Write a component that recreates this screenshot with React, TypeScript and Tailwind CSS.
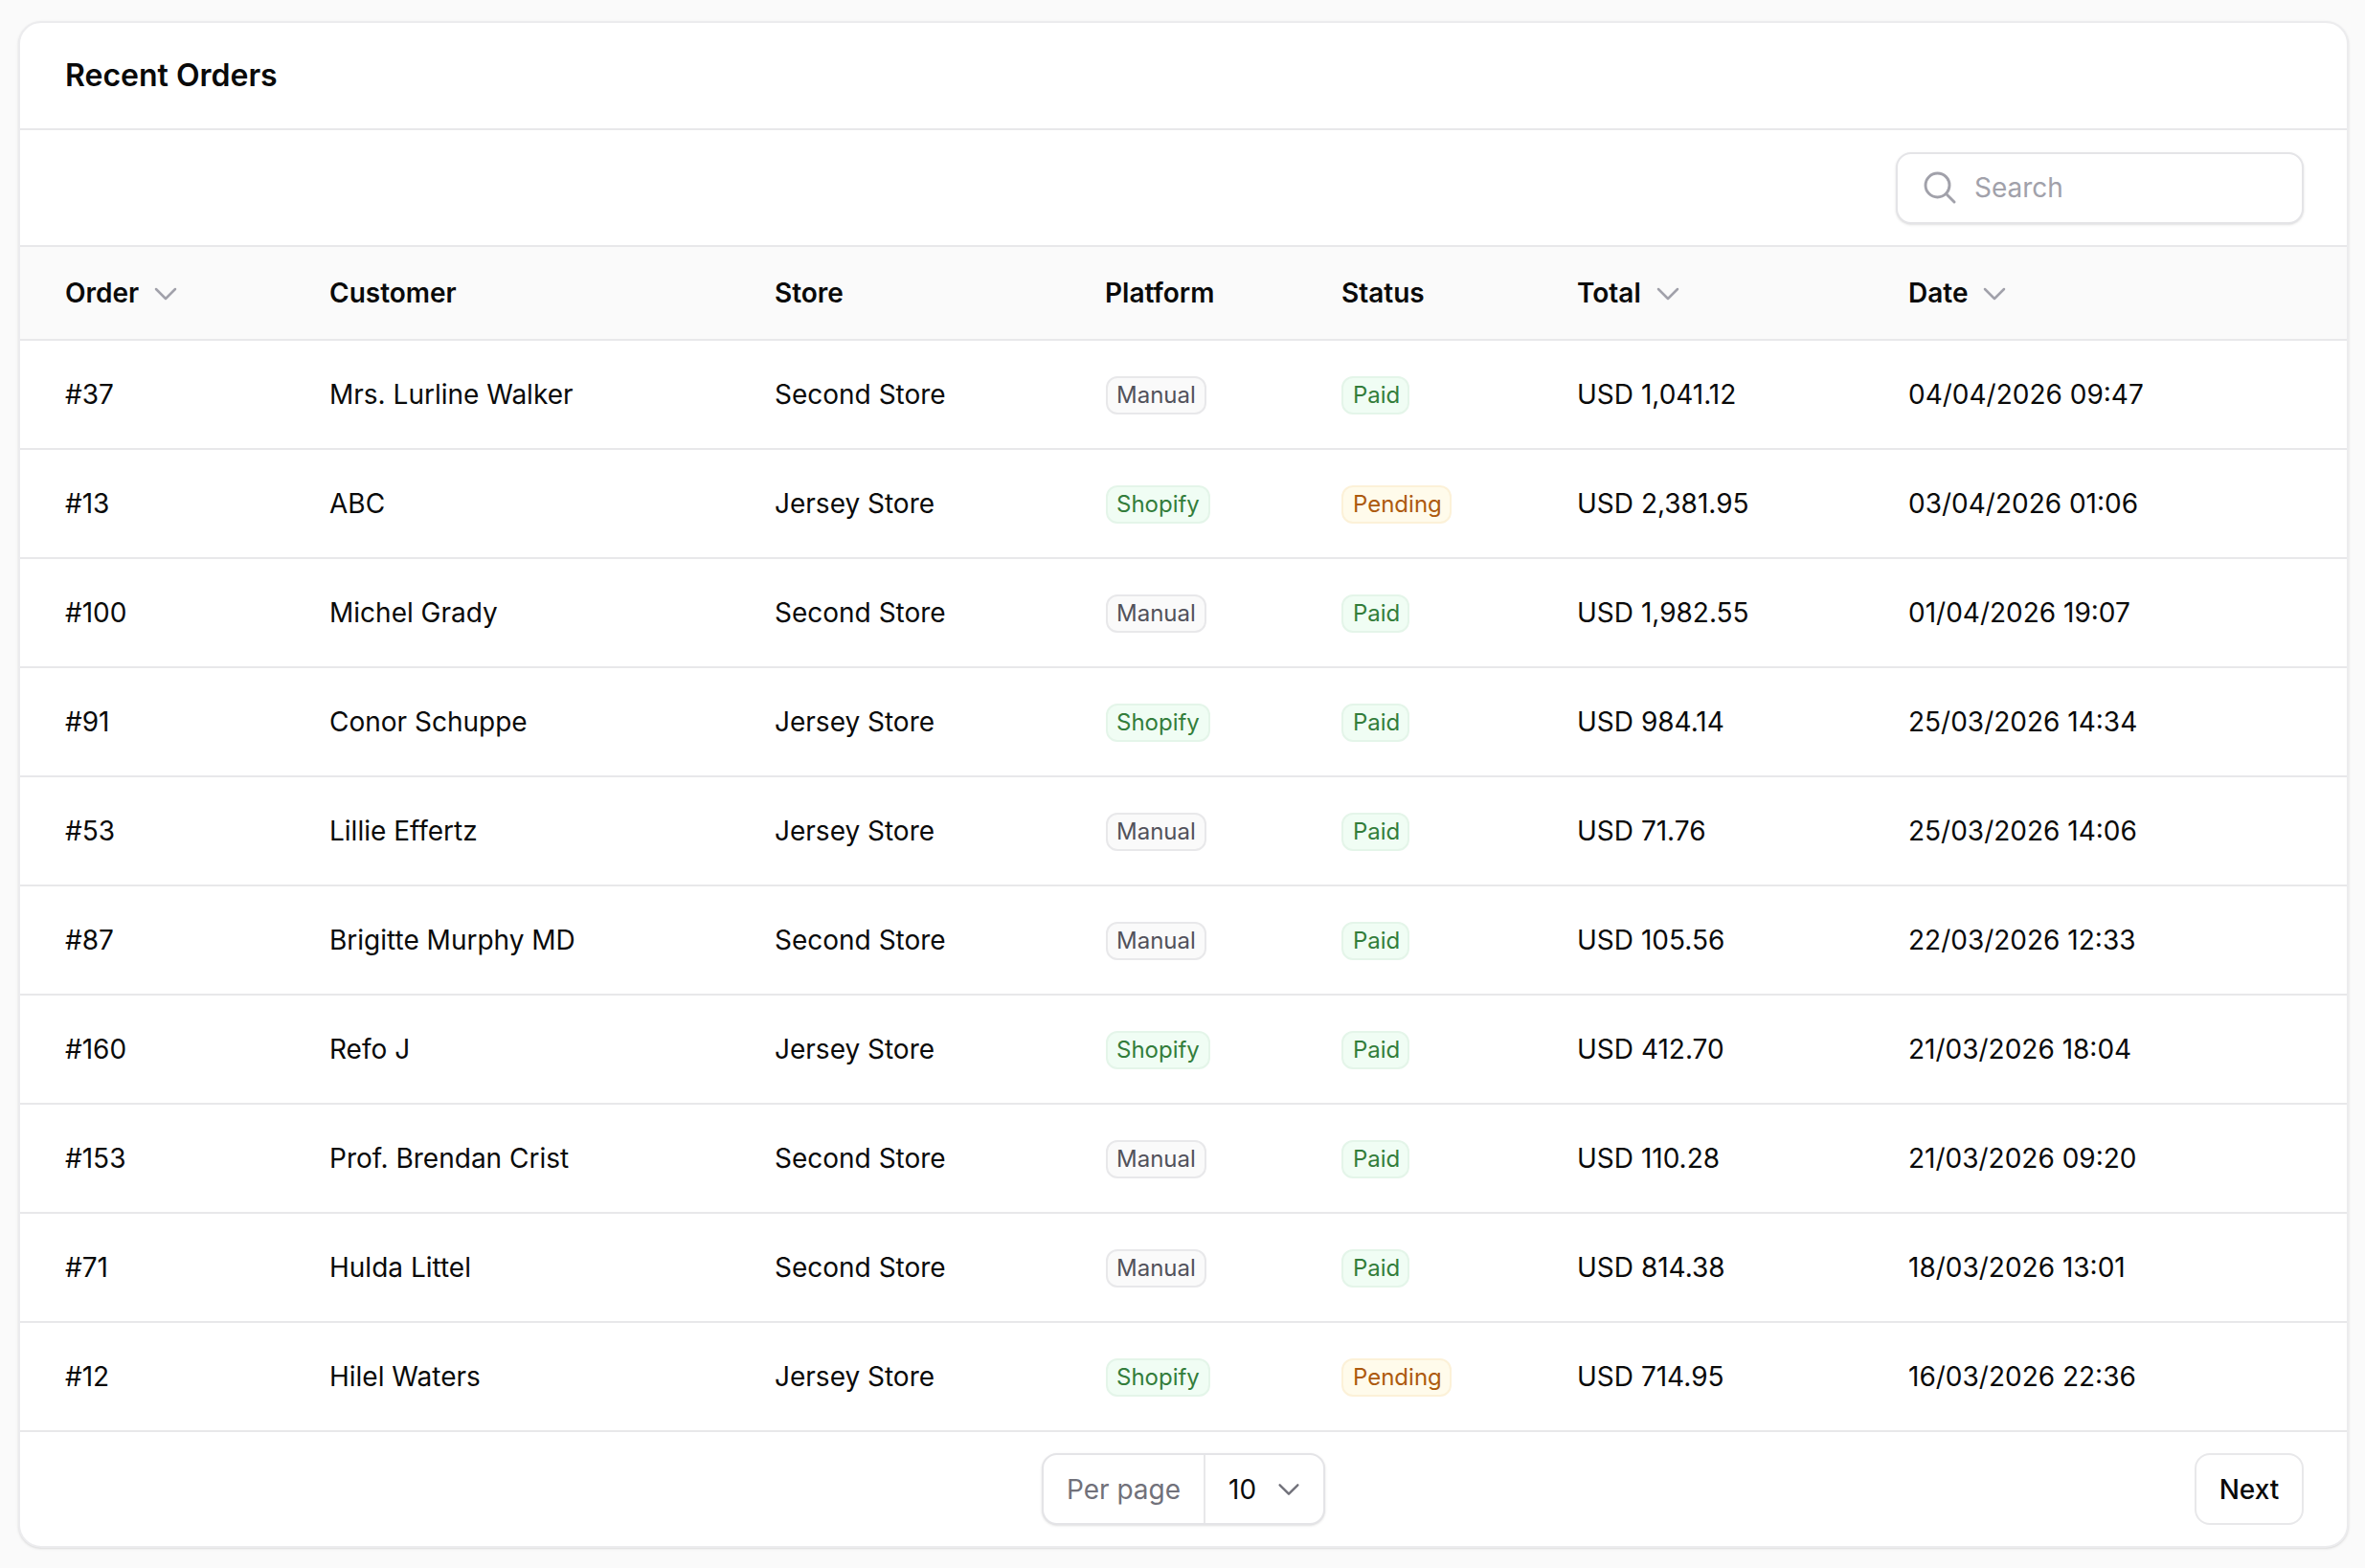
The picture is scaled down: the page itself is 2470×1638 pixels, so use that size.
const orders = [
    { id: '#37', customer: 'Mrs. Lurline Walker', store: 'Second Store', platform: 'Manual', status: 'Paid', total: 'USD 1,041.12', date: '04/04/2026 09:47' },
    { id: '#13', customer: 'ABC', store: 'Jersey Store', platform: 'Shopify', status: 'Pending', total: 'USD 2,381.95', date: '03/04/2026 01:06' },
    { id: '#100', customer: 'Michel Grady', store: 'Second Store', platform: 'Manual', status: 'Paid', total: 'USD 1,982.55', date: '01/04/2026 19:07' },
    { id: '#91', customer: 'Conor Schuppe', store: 'Jersey Store', platform: 'Shopify', status: 'Paid', total: 'USD 984.14', date: '25/03/2026 14:34' },
    { id: '#53', customer: 'Lillie Effertz', store: 'Jersey Store', platform: 'Manual', status: 'Paid', total: 'USD 71.76', date: '25/03/2026 14:06' },
    { id: '#87', customer: 'Brigitte Murphy MD', store: 'Second Store', platform: 'Manual', status: 'Paid', total: 'USD 105.56', date: '22/03/2026 12:33' },
    { id: '#160', customer: 'Refo J', store: 'Jersey Store', platform: 'Shopify', status: 'Paid', total: 'USD 412.70', date: '21/03/2026 18:04' },
    { id: '#153', customer: 'Prof. Brendan Crist', store: 'Second Store', platform: 'Manual', status: 'Paid', total: 'USD 110.28', date: '21/03/2026 09:20' },
    { id: '#71', customer: 'Hulda Littel', store: 'Second Store', platform: 'Manual', status: 'Paid', total: 'USD 814.38', date: '18/03/2026 13:01' },
    { id: '#12', customer: 'Hilel Waters', store: 'Jersey Store', platform: 'Shopify', status: 'Pending', total: 'USD 714.95', date: '16/03/2026 22:36' },
];

const badgeStyles: Record<string, string> = {
    Manual: 'ml-[1px] px-[9px] bg-[#fafafa] border-[#e8e8ea] text-[#52525b]',
    Shopify: 'ml-[1px] px-[9px] bg-[#f0fdf4] border-[#e4f5e9] text-[#337d3b]',
    Paid: 'pl-[10px] pr-[8px] bg-[#f0fdf4] border-[#e4f5e9] text-[#337d3b]',
    Pending: 'pl-[10px] pr-[8px] bg-[#fffbeb] border-[#fcf1d8] text-[#ad5a0e]',
};

function Chevron({ className }: { className: string }) {
    return (
        <svg viewBox="0 0 24 24" fill="none" stroke="currentColor" strokeWidth={1.9} strokeLinecap="round" strokeLinejoin="round" className={className}>
            <path d="m19.5 8.25-7.5 7.5-7.5-7.5" />
        </svg>
    );
}

function Badge({ label }: { label: string }) {
    return (
        <div className="flex items-center pt-[1px]">
            <span className={`inline-flex h-[40px] items-center rounded-[12px] border-2 text-[24px] leading-[32px] ${badgeStyles[label]}`}>
                {label}
            </span>
        </div>
    );
}

function SortHead({ label, className }: { label: string; className: string }) {
    return (
        <th className={`border-b-2 border-[#e8e8ea] text-left text-[28px] font-semibold ${className}`}>
            <span className="flex items-center gap-[12px]">
                {label}
                <Chevron className="mt-[1px] h-[32px] w-[32px] text-[#a1a1aa]" />
            </span>
        </th>
    );
}

function PlainHead({ label, className }: { label: string; className: string }) {
    return <th className={`border-b-2 border-[#e8e8ea] text-left text-[28px] font-semibold ${className}`}>{label}</th>;
}

export default function App() {
    return (
        <div className="min-h-screen bg-[#fafafa] pl-[19px] pr-[17px] pt-[22px] font-['Inter',sans-serif] text-[#0a0a0a]">
            <div className="overflow-hidden rounded-[24px] border-2 border-[#ececee] bg-white shadow-sm">
                {/* Title */}
                <div className="flex h-[112px] items-center border-b-2 border-[#e8e8ea] pl-[47px]">
                    <h2 className="text-[32px] font-semibold">Recent Orders</h2>
                </div>

                {/* Toolbar */}
                <div className="flex h-[122px] items-center justify-end border-b-2 border-[#e8e8ea] pr-[45px]">
                    <div className="flex h-[75px] w-[426px] items-center gap-[16px] rounded-[16px] border-2 border-[#e4e4e7] bg-white pl-[24px] shadow-sm">
                        <svg viewBox="0 0 24 24" fill="none" stroke="#a1a1aa" strokeWidth={1.75} strokeLinecap="round" strokeLinejoin="round" className="h-[40px] w-[40px]">
                            <path d="m21 21-5.197-5.197m0 0A7.5 7.5 0 1 0 5.196 5.196a7.5 7.5 0 0 0 10.607 10.607Z" />
                        </svg>
                        <span className="text-[28px] text-[#a1a1aa]">Search</span>
                    </div>
                </div>

                {/* Table */}
                <table className="w-full table-fixed border-separate border-spacing-0">
                    <colgroup>
                        <col className="w-[299px]" />
                        <col className="w-[465px]" />
                        <col className="w-[345px]" />
                        <col className="w-[247px]" />
                        <col className="w-[246px]" />
                        <col className="w-[346px]" />
                        <col />
                    </colgroup>
                    <thead>
                        <tr className="h-[98px] bg-[#fafafa]">
                            <SortHead label="Order" className="pl-[47px]" />
                            <PlainHead label="Customer" className="pl-[24px]" />
                            <PlainHead label="Store" className="pl-[24px]" />
                            <PlainHead label="Platform" className="pl-[24px]" />
                            <PlainHead label="Status" className="pl-[24px]" />
                            <SortHead label="Total" className="pl-[24px]" />
                            <SortHead label="Date" className="pl-[24px]" />
                        </tr>
                    </thead>
                    <tbody className="text-[28px]">
                        {orders.map((order) => (
                            <tr key={order.id} className="h-[114px]">
                                <td className="border-b-2 border-[#e8e8ea] pl-[47px]">{order.id}</td>
                                <td className="border-b-2 border-[#e8e8ea] pl-[24px]">{order.customer}</td>
                                <td className="border-b-2 border-[#e8e8ea] pl-[24px]">{order.store}</td>
                                <td className="border-b-2 border-[#e8e8ea] pl-[24px]"><Badge label={order.platform} /></td>
                                <td className="border-b-2 border-[#e8e8ea] pl-[24px]"><Badge label={order.status} /></td>
                                <td className="border-b-2 border-[#e8e8ea] pl-[24px]">{order.total}</td>
                                <td className="border-b-2 border-[#e8e8ea] pl-[24px]">{order.date}</td>
                            </tr>
                        ))}
                    </tbody>
                </table>

                {/* Pagination */}
                <div className="grid h-[119px] grid-cols-3 items-center px-[45px] text-[28px]">
                    <div />
                    <div className="flex justify-center">
                        <div className="flex h-[75px] items-center rounded-[16px] border-2 border-[#e4e4e7] bg-white shadow-sm">
                            <span className="flex h-full items-center border-r-2 border-[#e8e8ea] px-[24px] text-[#71717a]">Per page</span>
                            <span className="flex items-center gap-[19px] pl-[24px] pr-[21px]">
                                10
                                <Chevron className="h-[30px] w-[30px] text-[#71717a]" />
                            </span>
                        </div>
                    </div>
                    <div className="flex justify-end">
                        <button type="button" className="h-[75px] w-[114px] rounded-[16px] border-2 border-[#e8e8ea] bg-white font-medium">Next</button>
                    </div>
                </div>
            </div>
        </div>
    );
}
